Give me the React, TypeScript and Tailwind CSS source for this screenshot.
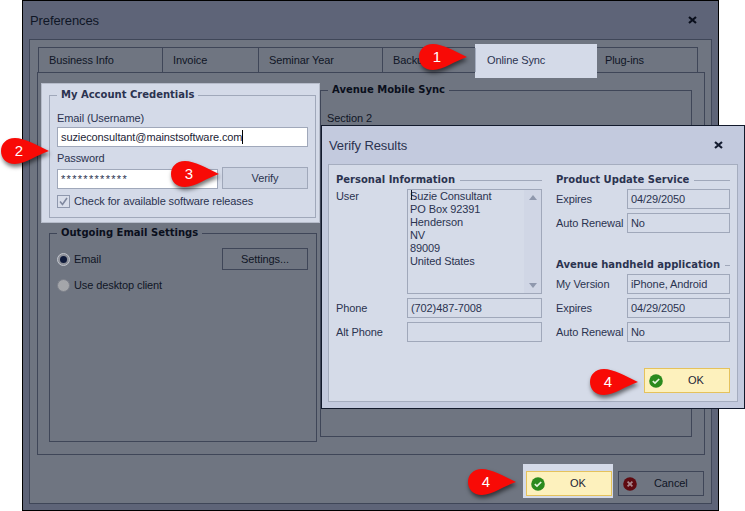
import type { ReactNode } from 'react'

const FONT = "font-['Liberation_Sans',sans-serif] tracking-[-0.1px]"
const BOLD = "font-['DejaVu_Sans',sans-serif] font-bold text-[10px] tracking-normal"

function Callout({ n, className }: { n: string; className: string }) {
  return (
    <div className={`absolute z-30 h-[28px] w-[50px] ${className}`}>
      <svg width="50" height="28" viewBox="0 0 50 28" className="absolute inset-0 overflow-visible drop-shadow-[1px_3px_2px_rgba(0,0,0,0.55)]">
        <path d="M15 1 C24 1 37 8 49 14 C37 18 25 27 15 27 C6 27 1 21 1 14 C1 7 6 1 15 1 Z" fill="#f80a06" />
      </svg>
      <span className="absolute left-[6px] top-[5px] w-[26px] text-center font-['Liberation_Sans',sans-serif] text-[15px] leading-[18px] tracking-normal text-white">
        {n}
      </span>
    </div>
  )
}

function CheckCircle() {
  return (
    <svg width="14" height="14" viewBox="0 0 14 14" className="shrink-0">
      <circle cx="7" cy="7" r="6.8" fill="#2b8a1d" />
      <path d="M3.8 7.2 L6 9.2 L10.2 5" fill="none" stroke="#e6f5df" strokeWidth="1.7" />
    </svg>
  )
}

function CancelCircle() {
  return (
    <svg width="14" height="14" viewBox="0 0 14 14" className="shrink-0">
      <circle cx="7" cy="7" r="6.8" fill="#5f0a10" />
      <path d="M4.6 4.6 L9.4 9.4 M9.4 4.6 L4.6 9.4" fill="none" stroke="#a8868b" strokeWidth="1.8" />
    </svg>
  )
}

function CloseX({ color }: { color: string }) {
  return (
    <svg width="9" height="8" viewBox="0 0 9 8">
      <path d="M1 1 L8 7 M8 1 L1 7" fill="none" stroke={color} strokeWidth="2.2" />
    </svg>
  )
}

function OkButton() {
  return (
    <button className="flex h-[25px] w-[86px] items-center border border-[#e5c25c] bg-[#fdf1bd] pl-[4px] text-[11px] text-[#1c2436]">
      <CheckCircle />
      <span className="ml-[25px]">OK</span>
    </button>
  )
}

function Tab({ label, width, active }: { label: string; width: string; active?: boolean }) {
  return (
    <div className={`relative h-[25px] ${width} border-t border-r border-[#3f4658] ${active ? 'z-10' : ''}`}>
      {active && <div className="absolute -left-[1px] -top-[4px] -z-10 h-[34px] w-[122px] bg-[#d4dae8]" />}
      {active && <div className="absolute inset-y-0 -left-[1px] w-[1px] bg-[#a5adbf]" />}
      <span className={`block pt-[3px] text-[11px] leading-[18px] ${active ? 'pl-[11px] text-[#2b3350]' : 'pl-[10px] text-[#0f1626]'}`}>
        {label}
      </span>
    </div>
  )
}

function Group({ title, className, children, legendClass }: { title: string; className: string; children?: ReactNode; legendClass: string }) {
  return (
    <fieldset className={`border ${className}`}>
      <legend className={`px-[4px] leading-[14px] ${BOLD} ${legendClass}`}>{title}</legend>
      {children}
    </fieldset>
  )
}

function DarkButton({ children }: { children: ReactNode }) {
  return (
    <button className="h-[22px] w-[86px] border border-[#3f4658] text-[11px] text-[#0f1626]">{children}</button>
  )
}

function Field({ value }: { value?: string }) {
  return (
    <div className="h-[20px] border border-[#a0a8ba] pl-[3px] text-[11px] leading-[18px] text-[#2b3350]">
      {value}
    </div>
  )
}

function SectionTitle({ title }: { title: string }) {
  return (
    <div className="flex h-[14px] items-center gap-[5px]">
      <span className={`whitespace-nowrap leading-[14px] text-[#2b3350] ${BOLD}`}>{title}</span>
      <div className="h-px flex-1 bg-[#a0a8ba]" />
    </div>
  )
}

function Row({ label, value, labelWidth }: { label: string; value?: string; labelWidth: string }) {
  return (
    <div className="flex items-center">
      <span className={`${labelWidth} shrink-0 whitespace-nowrap text-[11px] leading-[18px] text-[#2b3350]`}>{label}</span>
      <div className="flex-1">
        <Field value={value} />
      </div>
    </div>
  )
}

function VerifyDialog() {
  const address = ['Suzie Consultant', 'PO Box 92391', 'Henderson', 'NV', '89009', 'United States']
  return (
    <div className={`absolute left-[321px] top-[125px] z-20 flex h-[284px] w-[424px] flex-col border border-[#121a2c] bg-[#c3cade] ${FONT}`}>
      <div className="flex h-[38px] shrink-0 items-center justify-between pl-[7px] pr-[21px]">
        <span className="pt-[2px] text-[13px] text-[#2b3350]">Verify Results</span>
        <CloseX color="#141c30" />
      </div>
      <div className="mx-[6px] flex h-[238px] flex-col border border-[#a5adbf] bg-[#d5dbe8] pl-[7px] pr-[7px] pt-[8px]">
        <div className="flex gap-[14px]">
          <div className="flex w-[206px] flex-col gap-[4px]">
            <SectionTitle title="Personal Information" />
            <div className="-mt-[2px] flex h-[105px]">
              <span className="w-[71px] text-[11px] leading-[14px] text-[#2b3350]">User</span>
              <div className="relative flex h-[105px] flex-1 border border-[#a0a8ba]">
                <div className="relative flex-1 pl-[2px] text-[11px] leading-[13px] text-[#2b3350]">
                  <div className="absolute left-[3px] top-0 h-[10px] w-px bg-[#111827]" />
                  {address.map((line) => (
                    <div key={line}>{line}</div>
                  ))}
                </div>
                <div className="flex w-[17px] flex-col items-center justify-between bg-[#d0d6e5] py-[5px]">
                  <div className="h-0 w-0 border-x-[4px] border-b-[5px] border-x-transparent border-b-[#8f98ad]" />
                  <div className="h-0 w-0 border-x-[4px] border-t-[5px] border-x-transparent border-t-[#8f98ad]" />
                </div>
              </div>
            </div>
            <Row label="Phone" value="(702)487-7008" labelWidth="w-[71px]" />
            <Row label="Alt Phone" labelWidth="w-[71px]" />
          </div>
          <div className="flex w-[174px] flex-col">
            <SectionTitle title="Product Update Service" />
            <div className="mt-[2px] flex flex-col gap-[4px]">
              <Row label="Expires" value="04/29/2050" labelWidth="w-[71px]" />
              <Row label="Auto Renewal" value="No" labelWidth="w-[71px]" />
            </div>
            <div className="mt-[25px]">
              <SectionTitle title="Avenue handheld application" />
            </div>
            <div className="mt-[2px] flex flex-col gap-[4px]">
              <Row label="My Version" value="iPhone, Android" labelWidth="w-[71px]" />
              <Row label="Expires" value="04/29/2050" labelWidth="w-[71px]" />
              <Row label="Auto Renewal" value="No" labelWidth="w-[71px]" />
            </div>
          </div>
        </div>
        <div className="mt-[26px] flex justify-end">
          <OkButton />
        </div>
      </div>
      <Callout n="4" className="left-[267px] top-[242px]" />
    </div>
  )
}

export default function App() {
  return (
    <div className={`relative h-[511px] w-[745px] overflow-hidden bg-white ${FONT}`}>
      <div className="ml-[22px] flex h-[511px] w-[697px] flex-col border border-black bg-[#5e6478]">
        <div className="flex h-[38px] shrink-0 items-center justify-between pl-[7px] pr-[21px]">
          <span className="pt-[2px] text-[13px] text-[#0f1626]">Preferences</span>
          <CloseX color="#0a0f1c" />
        </div>
        <div className="mx-[6px] flex h-[465px] flex-col border border-[#3f4658] bg-[#6f7581] pl-[7px] pr-[6px] pt-[7px]">
          <div className="flex h-[25px] pl-[1px] pr-[6px]">
            <div className="flex border-l border-[#3f4658]">
              <Tab label="Business Info" width="w-[124px]" />
              <Tab label="Invoice" width="w-[96px]" />
              <Tab label="Seminar Year" width="w-[124px]" />
              <Tab label="Backup" width="w-[93px]" />
              <Tab label="Online Sync" width="w-[119px]" active />
              <Tab label="Plug-ins" width="w-[103px]" />
            </div>
          </div>
          <div className="flex h-[383px] border border-[#3f4658] pt-[10px]">
            <div className="ml-[3px] flex w-[279px] shrink-0 flex-col">
              <div className="relative z-10 h-[140px] border border-[#b6bcca] bg-[#d4dae8] py-[4px] pl-[7px] pr-[3px]">
                <Group title="My Account Credentials" className="h-[130px] border-[#a0a8ba] pl-[7px] pr-[7px]" legendClass="text-[#2b3350]">
                  <div className="flex flex-col text-[11px] text-[#2b3350]">
                    <span className="mt-[7px] leading-[18px]">Email (Username)</span>
                    <div className="flex h-[20px] items-center border border-[#a0a8ba] bg-white pl-[3px] text-[#1c2436]">
                      suzieconsultant@mainstsoftware.com
                      <span className="h-[14px] w-px bg-black" />
                    </div>
                    <span className="mt-[2px] leading-[18px]">Password</span>
                    <div className="flex items-end justify-between">
                      <div className="flex h-[20px] w-[161px] items-center border border-[#a0a8ba] bg-white pl-[3px] tracking-[1.3px] text-[#2b3350]">
                        ************
                      </div>
                      <button className="h-[22px] w-[86px] border border-[#a0a8ba] bg-[#ccd3e2]">Verify</button>
                    </div>
                    <label className="mt-[4px] flex items-center gap-[4px]">
                      <span className="flex h-[13px] w-[13px] items-center justify-center border border-[#8f98ad] bg-[#d9deea]">
                        <svg width="11" height="11" viewBox="0 0 11 11">
                          <path d="M2 5.5 L4.5 8.5 L9 2" fill="none" stroke="#7f889e" strokeWidth="1.6" />
                        </svg>
                      </span>
                      Check for available software releases
                    </label>
                  </div>
                </Group>
              </div>
              <Group title="Outgoing Email Settings" className="ml-[8px] mt-[3px] h-[216px] w-[268px] border-[#3f4658] pl-[7px] pr-[8px]" legendClass="text-[#0a0f1c]">
                <div className="flex items-center justify-between pt-[8px]">
                  <div className="flex items-center gap-[4px] text-[11px] text-[#0f1626]">
                    <span className="flex h-[13px] w-[13px] items-center justify-center rounded-full border border-[#c0c4cc] bg-[#8d9099]">
                      <span className="h-[7px] w-[7px] rounded-full bg-[#0f1a3a]" />
                    </span>
                    Email
                  </div>
                  <DarkButton>Settings...</DarkButton>
                </div>
                <div className="mt-[7px] flex items-center gap-[4px] text-[11px] text-[#0f1626]">
                  <span className="h-[13px] w-[13px] rounded-full border border-[#7c808a] bg-[#a4a6aa]" />
                  Use desktop client
                </div>
              </Group>
            </div>
            <div className="flex flex-col">
              <Group title="Avenue Mobile Sync" className="h-[354px] w-[372px] border-[#3f4658] pl-[7px]" legendClass="text-[#0a0f1c]">
                <span className="-ml-[1px] block pt-[12px] text-[11px] leading-[18px] text-[#0f1626]">Section 2</span>
              </Group>
            </div>
          </div>
          <div className="flex justify-end gap-[6px] pr-[1px] pt-[16px]">
            <div className="relative">
              <div className="absolute -left-[3px] -top-[7px] h-[34px] w-[90px] bg-[#d4dae8]" />
              <div className="relative">
                <OkButton />
              </div>
            </div>
            <button className="flex h-[25px] w-[86px] items-center border border-[#3f4658] pl-[4px] text-[11px] text-[#0f1626]">
              <CancelCircle />
              <span className="ml-[17px]">Cancel</span>
            </button>
          </div>
        </div>
      </div>
      <VerifyDialog />
      <Callout n="1" className="left-[418px] top-[43px]" />
      <Callout n="2" className="left-[0px] top-[137px]" />
      <Callout n="3" className="left-[170px] top-[160px]" />
      <Callout n="4" className="left-[467px] top-[468px]" />
    </div>
  )
}
